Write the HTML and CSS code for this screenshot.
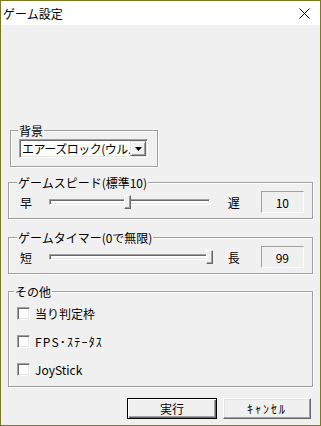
FILE: index.html
```html
<!DOCTYPE html>
<html lang="ja">
<head>
    <meta charset="UTF-8">
    <title>ゲーム設定</title>
    <link rel="stylesheet" href="styles.css">
</head>
<body>
    <div class="window">
        <div class="titlebar">
            <span class="title">ゲーム設定</span>
            <svg class="close" width="11" height="11" viewBox="0 0 11 11">
                <path d="M0.5 0.5L10.5 10.5M10.5 0.5L0.5 10.5" stroke="#000" stroke-width="1" fill="none"/>
            </svg>
        </div>

        <div class="content">
            <fieldset class="group group-bg">
                <legend>背景</legend>
                <div class="combo">
                    <span class="combo-text">エアーズロック(ウルル)</span>
                    <span class="combo-btn">
                        <svg width="7" height="4" viewBox="0 0 7 4"><path d="M0 0H7L3.5 4Z" fill="#000"/></svg>
                    </span>
                </div>
            </fieldset>

            <fieldset class="group group-speed">
                <legend>ゲームスピード(標準10)</legend>
                <div class="slider-row">
                    <span class="slider-label">早</span>
                    <div class="track">
                        <span class="thumb" style="left: 74px"></span>
                    </div>
                    <span class="slider-label end">遅</span>
                    <span class="value">10</span>
                </div>
            </fieldset>

            <fieldset class="group group-timer">
                <legend>ゲームタイマー(0で無限)</legend>
                <div class="slider-row">
                    <span class="slider-label">短</span>
                    <div class="track">
                        <span class="thumb" style="left: 156px"></span>
                    </div>
                    <span class="slider-label end">長</span>
                    <span class="value">99</span>
                </div>
            </fieldset>

            <fieldset class="group group-other">
                <legend>その他</legend>
                <label class="check"><span class="box"></span>当り判定枠</label>
                <label class="check"><span class="box"></span><span class="hw">FPS･ｽﾃｰﾀｽ</span></label>
                <label class="check"><span class="box"></span>JoyStick</label>
            </fieldset>

            <div class="buttons">
                <button class="btn default">実行</button>
                <button class="btn"><span class="hw wide">ｷｬﾝｾﾙ</span></button>
            </div>
        </div>
    </div>
</body>
</html>
```

FILE: styles.css
```css
* {
    box-sizing: border-box;
}

body {
    margin: 0;
    font-family: "Noto Sans CJK JP", "Noto Sans", sans-serif;
    font-size: 12px;
    line-height: 13px;
    color: #000;
    background: #f0f0f0;
}

.window {
    width: 321px;
    height: 426px;
    border: 1px solid #7a7a1a;
    background: #f0f0f0;
}

.titlebar {
    height: 24px;
    background: #fff;
    display: flex;
    align-items: center;
    justify-content: space-between;
    padding: 0 10px 0 2px;
}

.close {
    display: block;
}

.content {
    padding: 99px 7px 0 7px;
}

/* half-width katakana are wider in the original UI font */
.hw {
    letter-spacing: 1.2px;
}

.hw.wide {
    letter-spacing: 2px;
}

/* group boxes */
.group {
    margin: 0;
    min-width: 0;
    padding: 2px 8px 5px;
    border: 1px solid #a0a0a0;
    box-shadow: inset 1px 1px 0 #fff, 1px 1px 0 #fff;
}

.group legend {
    padding: 0 1px;
    background: #f0f0f0;
    line-height: 13px;
}

.group-bg {
    width: 148px;
    margin-left: 2px;
    padding-bottom: 8px;
}

.group-bg legend {
    margin-left: -1px;
}

.group-speed {
    margin-top: 9px;
}

.group-timer {
    margin-top: 12px;
}

.group-other {
    margin-top: 11px;
    padding-top: 9px;
    padding-bottom: 10px;
}

.group-other legend {
    margin-left: -3px;
}

/* combo box */
.combo {
    width: 129px;
    height: 19px;
    display: flex;
    background: #fff;
    border: 1px solid;
    border-color: #a0a0a0 #fff #fff #a0a0a0;
    box-shadow: inset 1px 1px 0 #696969, inset -1px -1px 0 #e3e3e3;
    padding: 1px;
}

.combo-text {
    flex: 1;
    overflow: hidden;
    white-space: nowrap;
    padding-left: 1px;
    line-height: 15px;
    letter-spacing: -0.5px;
}

.combo-btn {
    width: 16px;
    display: flex;
    align-items: center;
    justify-content: center;
    background: #f0f0f0;
    border: 1px solid;
    border-color: #e3e3e3 #696969 #696969 #e3e3e3;
    box-shadow: inset 1px 1px 0 #fff, inset -1px -1px 0 #a0a0a0;
}

/* sliders */
.slider-row {
    display: flex;
    align-items: center;
    height: 22px;
    padding-left: 3px;
}

.slider-label {
    width: 12px;
}

.track {
    position: relative;
    width: 163px;
    height: 6px;
    margin-left: 17px;
    background: #fff;
    border: 1px solid;
    border-color: #a0a0a0 #fff #fff #a0a0a0;
    box-shadow: inset 1px 1px 0 #696969, inset -1px -1px 0 #e3e3e3;
}

.thumb {
    position: absolute;
    top: -5px;
    width: 7px;
    height: 14px;
    background: #f0f0f0;
    border: 1px solid;
    border-color: #fff #696969 #696969 #fff;
    box-shadow: inset -1px -1px 0 #a0a0a0;
}

.slider-label.end {
    margin-left: 18px;
}

.value {
    width: 44px;
    height: 22px;
    margin-left: 21px;
    display: flex;
    align-items: center;
    justify-content: center;
    border: 1px solid;
    border-color: #a0a0a0 #fff #fff #a0a0a0;
}

/* checkboxes */
.check {
    display: flex;
    align-items: center;
    gap: 5px;
    height: 13px;
}

.check + .check {
    margin-top: 15px;
}

.box {
    width: 13px;
    height: 13px;
    background: #fff;
    border: 1px solid;
    border-color: #a0a0a0 #fff #fff #a0a0a0;
    box-shadow: inset 1px 1px 0 #696969, inset -1px -1px 0 #e3e3e3;
}

/* buttons */
.buttons {
    display: flex;
    justify-content: flex-end;
    gap: 6px;
    margin-top: 11px;
    margin-right: 2px;
}

.btn {
    width: 88px;
    height: 21px;
    padding: 0;
    font: inherit;
    color: #000;
    background: #f0f0f0;
    border: 1px solid;
    border-color: #fff #696969 #696969 #fff;
    box-shadow: inset -1px -1px 0 #a0a0a0, inset 1px 1px 0 #e3e3e3;
}

.btn.default {
    width: 90px;
    border-color: #000;
    box-shadow: inset 1px 1px 0 #fff, inset -1px -1px 0 #696969, inset -2px -2px 0 #a0a0a0;
}
```
